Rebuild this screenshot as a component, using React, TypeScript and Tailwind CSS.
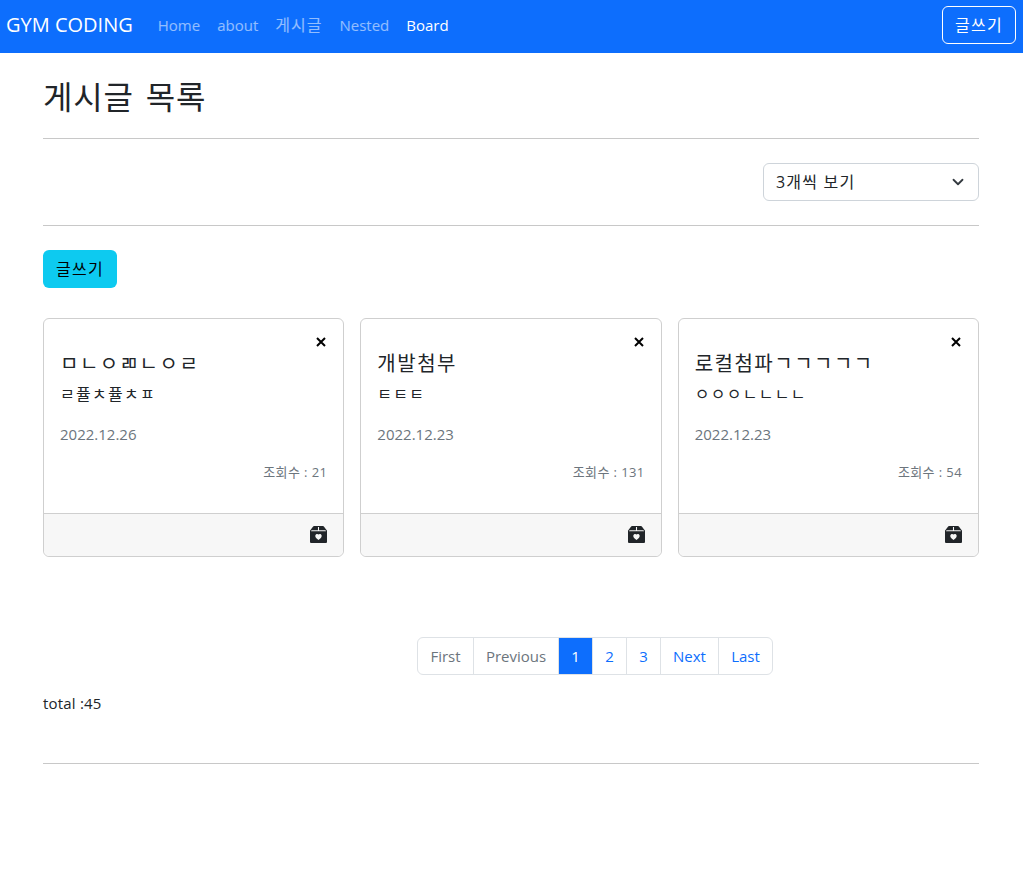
import { BsBox2HeartFill } from 'react-icons/bs'

const font = '[font-family:"Open_Sans","Noto_Sans_CJK_KR",sans-serif]'

const posts = [
  { title: 'ㅁㄴㅇㄻㄴㅇㄹ', body: 'ㄹ퓰ㅊ퓰ㅊㅍ', date: '2022.12.26', views: 21 },
  { title: '개발첨부', body: 'ㅌㅌㅌ', date: '2022.12.23', views: 131 },
  { title: '로컬첨파ㄱㄱㄱㄱㄱ', body: 'ㅇㅇㅇㄴㄴㄴㄴ', date: '2022.12.23', views: 54 },
]

function Card({ title, body, date, views }: { title: string; body: string; date: string; views: number }) {
  return (
    <div className="relative flex h-[239px] w-full flex-col rounded-md border border-[#cfcfcf]">
      <button className="absolute right-[17px] top-[18px] text-black">
        <svg width="10" height="10" viewBox="0 0 10 10" stroke="currentColor" strokeWidth="2" className="block">
          <path d="M1 1l8 8M9 1l-8 8" />
        </svg>
      </button>
      <div className="flex-1 px-4 pt-[30px]">
        <h5 className="text-[20px] leading-[30px] tracking-[1.5px] text-[#212529]">{title}</h5>
        <p className="mt-[3px] text-[16px] leading-[24px] tracking-[1.3px] text-[#212529]">{body}</p>
        <p className="mt-[16px] text-[15px] leading-[24px] text-[#6c757d]">{date}</p>
        <p className="mt-[16px] text-right text-[13px] leading-[20px] tracking-[0.4px] text-[#6c757d]">조회수 : {views}</p>
      </div>
      <div className="flex h-[43px] items-center justify-end rounded-b-md border-t border-[#cfcfcf] bg-[#f7f7f7] px-4 pb-[2px]">
        <BsBox2HeartFill size={17} color="#212529" />
      </div>
    </div>
  )
}

const pages = [
  { label: 'First', cls: 'w-[57px] text-[#6c757d] rounded-l-md' },
  { label: 'Previous', cls: 'w-[86px] text-[#6c757d]' },
  { label: '1', cls: 'w-[35px] bg-[#0d6efd] border-[#0d6efd] text-white' },
  { label: '2', cls: 'w-[35px] text-[#0d6efd]' },
  { label: '3', cls: 'w-[35px] text-[#0d6efd]' },
  { label: 'Next', cls: 'w-[59px] text-[#0d6efd]' },
  { label: 'Last', cls: 'w-[55px] text-[#0d6efd] rounded-r-md' },
]

export default function App() {
  return (
    <div className={`${font} min-h-[889px] bg-white text-[16px] text-[#212529]`}>
      <nav className="flex h-[53px] items-center bg-[#0d6efd] pb-[3px] pl-[6px] pr-[7px]">
        <span className="mr-[17px] text-[20px] text-white">GYM CODING</span>
        <div className="flex flex-1 items-baseline gap-[1px] text-[15px]">
          <a className="px-2 text-white/55">Home</a>
          <a className="px-2 text-white/55">about</a>
          <a className="px-2 text-[16px] tracking-[1px] text-white/55">게시글</a>
          <a className="px-2 text-white/55">Nested</a>
          <a className="px-2 text-white">Board</a>
        </div>
        <button className="h-[38px] w-[74px] rounded-md border border-white tracking-[1.3px] text-white">글쓰기</button>
      </nav>

      <main className="ml-[43px] w-[936px]">
        <h2 className="mt-[20px] text-[32px] leading-[48px] tracking-[0.8px] [word-spacing:3px]">게시글 목록</h2>
        <hr className="mt-[17px] border-[#c8c8c8]" />
        <div className="mt-[24px] flex justify-end">
          <div className="flex h-[38px] w-[216px] items-center justify-between rounded-md border border-[#ced4da] pl-3 pr-[14px]">
            <span className="tracking-[1.2px]">3개씩 보기</span>
            <svg width="12" height="12" viewBox="0 0 16 16" fill="none" stroke="#343a40" strokeWidth="2.4" strokeLinecap="round" strokeLinejoin="round">
              <path d="m2 5 6 6 6-6" />
            </svg>
          </div>
        </div>
        <hr className="mt-[24px] border-[#c8c8c8]" />
        <button className="mt-[24px] h-[38px] w-[74px] rounded-md bg-[#0dcaf0] tracking-[1.3px] text-black">글쓰기</button>
        <div className="mt-[30px] grid grid-cols-3 gap-4">
          {posts.map((p) => (
            <Card key={p.title} {...p} />
          ))}
        </div>
        <div className="mt-[80px] flex pl-[375px] text-[15px]">
          {pages.map((p) => (
            <a key={p.label} className={`-ml-px flex h-[38px] items-center justify-center border border-[#dee2e6] ${p.cls}`}>{p.label}</a>
          ))}
        </div>
        <p className="mt-[16px] text-[15px] leading-[24px] tracking-[0.2px]">total :45</p>
        <hr className="mt-[48px] border-[#c8c8c8]" />
      </main>
    </div>
  )
}
